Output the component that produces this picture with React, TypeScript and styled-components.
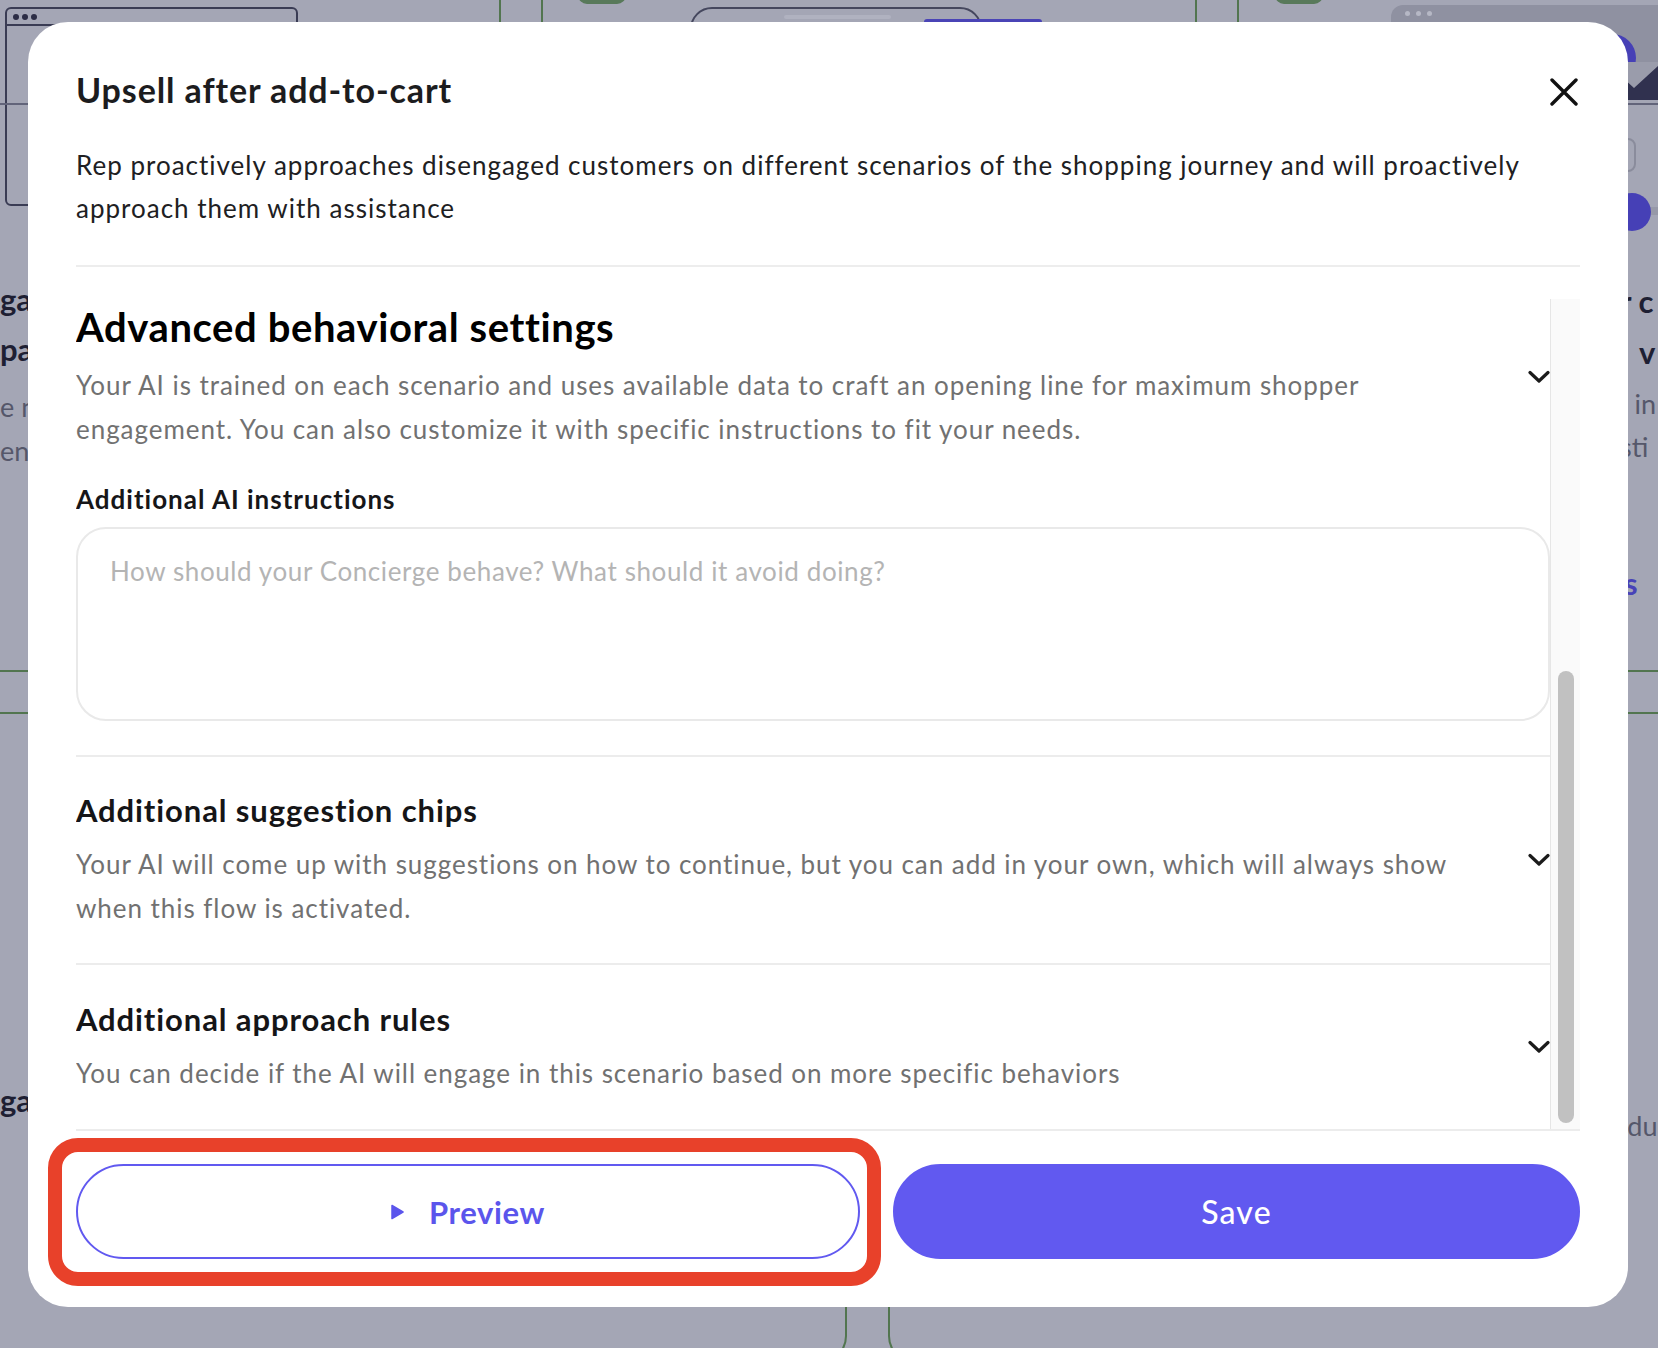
import React from 'react'
import styled, { createGlobalStyle } from 'styled-components'

const GlobalStyle = createGlobalStyle`
  html, body {
    margin: 0;
    padding: 0;
  }
  body {
    width: 1658px;
    height: 1348px;
    overflow: hidden;
    background: #a4a6b5;
    font-family: Lato, "Noto Sans", sans-serif;
  }
  * {
    box-sizing: border-box;
  }
`

const PURPLE = '#6159f0'

// ---- flow canvas behind the overlay ----

const Canvas = styled.div`
  position: relative;
  width: 1658px;
  height: 1348px;
  overflow: hidden;
  background: #a4a6b5;
`

const VLine = styled.div<{ $x: number }>`
  position: absolute;
  left: ${p => p.$x}px;
  top: 0;
  width: 2px;
  height: 40px;
  background: #52754f;
`

const HLine = styled.div<{ $y: number; $color?: string }>`
  position: absolute;
  left: 0;
  top: ${p => p.$y}px;
  width: 1658px;
  height: 2px;
  background: ${p => p.$color || '#52754f'};
`

const Pill = styled.div<{ $x: number }>`
  position: absolute;
  left: ${p => p.$x}px;
  top: -14px;
  width: 48px;
  height: 18px;
  border-radius: 9px;
  background: #58795a;
`

const BrowserCard = styled.div`
  position: absolute;
  left: 5px;
  top: 7px;
  width: 293px;
  height: 199px;
  border: 2px solid #3a3c54;
  border-radius: 6px;
  &::before {
    content: '';
    position: absolute;
    left: 6px;
    top: 5px;
    width: 6px;
    height: 6px;
    border-radius: 50%;
    background: #2c2d45;
    box-shadow: 9px 0 0 #2c2d45, 18px 0 0 #2c2d45;
  }
  &::after {
    content: '';
    position: absolute;
    left: 0;
    right: 0;
    top: 15px;
    height: 2px;
    background: #3a3c54;
  }
`

const OutlineShape = styled.div`
  position: absolute;
  left: 690px;
  top: 7px;
  width: 292px;
  height: 80px;
  border: 2px solid #45475e;
  border-radius: 22px;
  &::before {
    content: '';
    position: absolute;
    left: 92px;
    top: 6px;
    width: 107px;
    height: 4px;
    border-radius: 2px;
    background: #b0b2c0;
  }
`

const PurpleBar = styled.div`
  position: absolute;
  left: 924px;
  top: 19px;
  width: 118px;
  height: 12px;
  border-radius: 3px;
  background: #4a44b6;
`

const GreyCard = styled.div`
  position: absolute;
  left: 1391px;
  top: 5px;
  width: 300px;
  height: 90px;
  border-radius: 12px;
  background: #8f91a1;
  &::before {
    content: '';
    position: absolute;
    left: 14px;
    top: 6px;
    width: 5px;
    height: 5px;
    border-radius: 50%;
    background: #b6b8c5;
    box-shadow: 11px 0 0 #b6b8c5, 22px 0 0 #b6b8c5;
  }
`

const Dot = styled.div<{ $x: number; $y: number; $r: number }>`
  position: absolute;
  left: ${p => p.$x - p.$r}px;
  top: ${p => p.$y - p.$r}px;
  width: ${p => p.$r * 2}px;
  height: ${p => p.$r * 2}px;
  border-radius: 50%;
  background: #4640b6;
`

const GreyBar = styled.div`
  position: absolute;
  left: 1630px;
  top: 207px;
  width: 28px;
  height: 8px;
  background: #9799a8;
`

const SmallOutline = styled.div`
  position: absolute;
  left: 1590px;
  top: 138px;
  width: 46px;
  height: 34px;
  border: 2px solid #8a8c9c;
  border-radius: 8px;
`

const BgText = styled.div<{ $x: number; $y: number; $tone: 'dark' | 'grey' | 'purple' }>`
  position: absolute;
  left: ${p => p.$x}px;
  top: ${p => p.$y - 16}px;
  white-space: pre;
  line-height: 32px;
  font-size: ${p => (p.$tone === 'grey' ? 27 : 31)}px;
  font-weight: ${p => (p.$tone === 'grey' ? 400 : 700)};
  color: ${p => (p.$tone === 'dark' ? '#1e1f33' : p.$tone === 'grey' ? '#55576a' : '#4842b8')};
`

const CanvasSvg = styled.svg<{ $x: number; $y: number }>`
  position: absolute;
  left: ${p => p.$x}px;
  top: ${p => p.$y}px;
`

// ---- modal ----

const Modal = styled.div`
  position: absolute;
  left: 28px;
  top: 22px;
  width: 1600px;
  height: 1285px;
  padding: 46px 48px 48px;
  background: #fff;
  border-radius: 40px;
  display: flex;
  flex-direction: column;
`

const Header = styled.div`
  display: flex;
  align-items: center;
  justify-content: space-between;
`

const Title = styled.h2`
  margin: 0;
  font-size: 34px;
  line-height: 44px;
  font-weight: 700;
  letter-spacing: 0.9px;
  color: #1c1c1e;
`

const CloseButton = styled.button`
  display: flex;
  padding: 0;
  margin-top: 4px;
  margin-right: 2px;
  border: 0;
  background: none;
  cursor: pointer;
`

const Intro = styled.p`
  margin: 32px 0 0;
  font-size: 26px;
  line-height: 43px;
  letter-spacing: 1px;
  color: #202022;
`

const Divider = styled.div`
  height: 2px;
  margin: 35px 0 32px;
  background: #ededed;
`

const Scroller = styled.div`
  height: 832px;
  flex: none;
  display: flex;
  border-bottom: 2px solid #ececec;
`

const ScrollBody = styled.div`
  flex: 1;
  min-width: 0;
  overflow: hidden;
`

// the panel is shown scrolled down to its last section
const ScrollTrack = styled.div`
  width: 30px;
  flex: none;
  display: flex;
  flex-direction: column;
  justify-content: flex-end;
  padding: 6px 6px 6px 7px;
  background: #fafafa;
  border-left: 1px solid #e6e6e6;
`

const ScrollThumb = styled.div`
  height: 452px;
  border-radius: 8px;
  background: #c1c1c1;
`

const Section = styled.div<{ $top: number; $bottom: number }>`
  padding: ${p => p.$top}px 0 ${p => p.$bottom}px;
  &:not(:last-child) {
    border-bottom: 2px solid #ececec;
  }
`

const SectionHead = styled.div`
  display: flex;
  align-items: center;
`

const HeadText = styled.div`
  flex: 1;
  padding-right: 58px;
  display: flex;
  flex-direction: column;
  gap: 12px;
`

const SectionTitle = styled.h3<{ $big?: boolean }>`
  margin: 0;
  font-size: ${p => (p.$big ? 40 : 31)}px;
  line-height: ${p => (p.$big ? 48 : 40)}px;
  letter-spacing: ${p => (p.$big ? 0.6 : 0.9)}px;
  font-weight: 700;
  color: ${p => (p.$big ? '#000' : '#151517')};
`

const SectionText = styled.p`
  margin: 0;
  font-size: 26px;
  line-height: 44px;
  letter-spacing: 0.95px;
  color: #717171;
`

const Chevron = styled.svg`
  flex: none;
`

const FieldLabel = styled.label`
  display: block;
  margin-top: 32px;
  font-size: 26px;
  line-height: 32px;
  letter-spacing: 1px;
  font-weight: 700;
  color: #161618;
`

const TextArea = styled.textarea`
  display: block;
  width: 100%;
  height: 194px;
  margin-top: 12px;
  padding: 24px 32px;
  border: 2px solid #e9e9e9;
  border-radius: 30px;
  resize: none;
  outline: none;
  font-family: inherit;
  font-size: 26px;
  line-height: 36px;
  letter-spacing: 0.6px;
  color: #222;
  &::placeholder {
    color: #b4b4b4;
  }
`

const Footer = styled.div`
  display: grid;
  grid-template-columns: 784fr 687fr;
  gap: 33px;
  margin-top: 33px;
`

const PreviewWrap = styled.div`
  position: relative;
`

const PillButton = styled.button<{ $primary?: boolean }>`
  width: 100%;
  height: 95px;
  border-radius: 48px;
  border: 2px solid ${PURPLE};
  background: ${p => (p.$primary ? PURPLE : '#fff')};
  color: ${p => (p.$primary ? '#fff' : '#5b55ec')};
  font-family: inherit;
  font-size: ${p => (p.$primary ? 32 : 31)}px;
  font-weight: ${p => (p.$primary ? 500 : 700)};
  letter-spacing: ${p => (p.$primary ? 1.2 : 0.6)}px;
  display: flex;
  align-items: center;
  justify-content: center;
  gap: 25px;
  cursor: pointer;
`

const Highlight = styled.div`
  position: absolute;
  left: -28px;
  top: -26px;
  right: -21px;
  bottom: -27px;
  border: 14px solid #e8412a;
  border-radius: 30px;
  pointer-events: none;
`

const ChevronDown = () => (
  <Chevron width="22" height="14" viewBox="0 0 22 14">
    <path d="M2 2.5 L11 11 L20 2.5" fill="none" stroke="#1b1b1b" strokeWidth="3.2" strokeLinecap="round" strokeLinejoin="round" />
  </Chevron>
)

type Accordion = {
  title: string;
  text: string;
}

const moreSections: Accordion[] = [
  {
    title: 'Additional suggestion chips',
    text: 'Your AI will come up with suggestions on how to continue, but you can add in your own, which will always show when this flow is activated.',
  },
  {
    title: 'Additional approach rules',
    text: 'You can decide if the AI will engage in this scenario based on more specific behaviors',
  },
]

const App = () => {
  return (
    <>
      <GlobalStyle />
      <Canvas>
        <BrowserCard />
        <VLine $x={499} />
        <VLine $x={541} />
        <Pill $x={578} />
        <OutlineShape />
        <PurpleBar />
        <VLine $x={1195} />
        <VLine $x={1237} />
        <Pill $x={1275} />
        <GreyCard />
        <Dot $x={1612} $y={58} $r={24} />
        <CanvasSvg $x={1610} $y={62} width="48" height="40" viewBox="0 0 48 40">
          <rect x="0" y="0" width="48" height="38" fill="#9a9cab" />
          <polygon points="0,4 24,26 48,4 48,38 0,38" fill="#30314f" />
        </CanvasSvg>
        <HLine $y={103} $color="#62647a" />
        <SmallOutline />
        <GreyBar />
        <Dot $x={1632} $y={212} $r={19} />
        <BgText $x={1620} $y={301} $tone="dark">r c</BgText>
        <BgText $x={1639} $y={352} $tone="dark">v</BgText>
        <BgText $x={1622} $y={404} $tone="grey">’ in</BgText>
        <BgText $x={1620} $y={447} $tone="grey">sti</BgText>
        <BgText $x={1624} $y={583} $tone="purple">s</BgText>
        <BgText $x={1612} $y={1126} $tone="grey">odu</BgText>
        <BgText $x={0} $y={299} $tone="dark">ga</BgText>
        <BgText $x={0} $y={349} $tone="dark">pa</BgText>
        <BgText $x={0} $y={407} $tone="grey">e n</BgText>
        <BgText $x={0} $y={451} $tone="grey">en</BgText>
        <BgText $x={0} $y={1100} $tone="dark">ga</BgText>
        <HLine $y={670} />
        <HLine $y={712} />
        <CanvasSvg $x={830} $y={1280} width="80" height="68" viewBox="0 0 80 68">
          <path d="M16 0 V56 Q16 64 12 70" fill="none" stroke="#52754f" strokeWidth="2" />
          <path d="M59 0 V56 Q59 64 63 70" fill="none" stroke="#52754f" strokeWidth="2" />
        </CanvasSvg>

        <Modal role="dialog">
          <Header>
            <Title>Upsell after add-to-cart</Title>
            <CloseButton aria-label="Close">
              <svg width="28" height="28" viewBox="0 0 28 28">
                <path d="M2 2 L26 26 M26 2 L2 26" stroke="#111" strokeWidth="3.4" strokeLinecap="round" />
              </svg>
            </CloseButton>
          </Header>
          <Intro>
            Rep proactively approaches disengaged customers on different scenarios of the shopping journey and will proactively approach them with assistance
          </Intro>
          <Divider />

          <Scroller>
            <ScrollBody>
              <Section $top={4} $bottom={34}>
                <SectionHead>
                  <HeadText>
                    <SectionTitle $big>Advanced behavioral settings</SectionTitle>
                    <SectionText>
                      Your AI is trained on each scenario and uses available data to craft an opening line for maximum shopper engagement. You can also customize it with specific instructions to fit your needs.
                    </SectionText>
                  </HeadText>
                  <ChevronDown />
                </SectionHead>
                <FieldLabel htmlFor="ai-instructions">Additional AI instructions</FieldLabel>
                <TextArea id="ai-instructions" placeholder="How should your Concierge behave? What should it avoid doing?" />
              </Section>

              {moreSections.map((section, sectionIdx) => (
                <Section key={sectionIdx} $top={sectionIdx ? 34 : 33} $bottom={sectionIdx ? 32 : 33}>
                  <SectionHead>
                    <HeadText>
                      <SectionTitle>{section.title}</SectionTitle>
                      <SectionText>{section.text}</SectionText>
                    </HeadText>
                    <ChevronDown />
                  </SectionHead>
                </Section>
              ))}
            </ScrollBody>
            <ScrollTrack>
              <ScrollThumb />
            </ScrollTrack>
          </Scroller>

          <Footer>
            <PreviewWrap>
              <PillButton>
                <svg width="13" height="16" viewBox="0 0 13 16">
                  <path d="M1 1.5 L12 8 L1 14.5 Z" fill="#5b55ec" stroke="#5b55ec" strokeWidth="1.5" strokeLinejoin="round" />
                </svg>
                Preview
              </PillButton>
              <Highlight />
            </PreviewWrap>
            <PillButton $primary>Save</PillButton>
          </Footer>
        </Modal>
      </Canvas>
    </>
  )
}

export default App
